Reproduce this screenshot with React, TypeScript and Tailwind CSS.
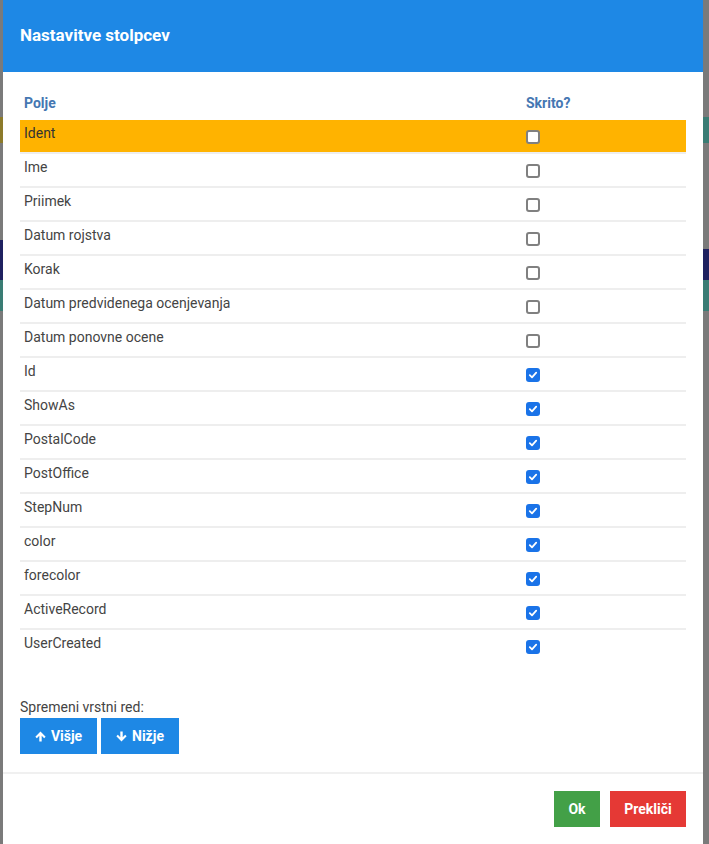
import React from "react";

type Field = { name: string; hidden: boolean };

const fields: Field[] = [
  { name: "Ident", hidden: false },
  { name: "Ime", hidden: false },
  { name: "Priimek", hidden: false },
  { name: "Datum rojstva", hidden: false },
  { name: "Korak", hidden: false },
  { name: "Datum predvidenega ocenjevanja", hidden: false },
  { name: "Datum ponovne ocene", hidden: false },
  { name: "Id", hidden: true },
  { name: "ShowAs", hidden: true },
  { name: "PostalCode", hidden: true },
  { name: "PostOffice", hidden: true },
  { name: "StepNum", hidden: true },
  { name: "color", hidden: true },
  { name: "forecolor", hidden: true },
  { name: "ActiveRecord", hidden: true },
  { name: "UserCreated", hidden: true },
];

function Check({ checked }: { checked: boolean }) {
  if (checked) {
    return (
      <div className="w-[14px] h-[14px] rounded-[3px] bg-[#1a73e8] flex items-center justify-center">
        <svg width="10" height="10" viewBox="0 0 10 10">
          <path d="M1.8 5.2 L4 7.3 L8.2 2.6" fill="none" stroke="white" strokeWidth="1.8" strokeLinecap="round" strokeLinejoin="round" />
        </svg>
      </div>
    );
  }
  return <div className="w-[14px] h-[14px] rounded-[3px] border-2 border-[#808080] bg-white" />;
}

// solid arrow glyph, pointing up by default
function Arrow({ down }: { down?: boolean }) {
  return (
    <svg width="11" height="11" viewBox="0 0 12 12" className={down ? "rotate-180" : ""}>
      <path d="M6 0.5 L11.6 6.2 L10 7.8 L7.3 5.1 V11.5 H4.7 V5.1 L2 7.8 L0.4 6.2 Z" fill="white" />
    </svg>
  );
}

export default function App() {
  return (
    <div
      className="w-[709px] h-[844px] flex bg-[#7a7a7a] overflow-hidden"
      style={{ fontFamily: "Roboto, 'Liberation Sans', sans-serif" }}
    >
      {/* page behind the dialog, visible at the edges */}
      <div className="w-[3px] flex flex-col bg-[#7a7a7a]">
        <div className="h-[117px]" />
        <div className="h-[26px] bg-[#8c7a2a]" />
        <div className="h-[97px]" />
        <div className="h-[40px] bg-[#1f2160]" />
        <div className="h-[31px] bg-[#3a7c74]" />
      </div>

      <div className="w-[700px] bg-white flex flex-col">
        <div className="h-[72px] bg-[#1e88e5] flex items-center px-[17px] pb-[1px]">
          <h1 className="text-white text-[17px] font-bold">Nastavitve stolpcev</h1>
        </div>

        <div className="px-[17px] pt-[16px]">
          <div className="flex h-[32px] items-center text-[14px] font-bold text-[#4577b2] pb-[2px]">
            <div className="w-[502px] pl-[4px]">Polje</div>
            <div className="flex-1 pl-[4px]">Skrito?</div>
          </div>
          {fields.map((f, i) => (
            <div
              key={f.name}
              className={
                i === 0
                  ? "flex h-[32px] items-center bg-[#ffb300] text-[#333]"
                  : "flex h-[34px] items-center border-t-2 border-[#eeeeee] text-[#444]"
              }
            >
              <div className={i === 0 ? "w-[502px] pl-[4px] text-[14px] pb-[6px]" : "w-[502px] pl-[4px] text-[14px] pb-[6px]"}>
                {f.name}
              </div>
              <div className="flex-1 pl-[4px] pt-[1px]">
                <Check checked={f.hidden} />
              </div>
            </div>
          ))}

          <div className="mt-[35px] text-[14px] text-[#444]">Spremeni vrstni red:</div>
          <div className="flex gap-[4px]">
            <button className="w-[77px] h-[36px] bg-[#1e88e5] text-white text-[14px] font-bold flex items-center justify-center gap-[5px]">
              <Arrow />
              Višje
            </button>
            <button className="w-[78px] h-[36px] bg-[#1e88e5] text-white text-[14px] font-bold flex items-center justify-center gap-[5px]">
              <Arrow down />
              Nižje
            </button>
          </div>
        </div>

        <div className="mt-[18px] border-t-2 border-[#f0f0f0]" />
        <div className="flex justify-end gap-[10px] px-[17px] pt-[17px]">
          <button className="w-[46px] h-[36px] bg-[#43a047] text-white text-[14px] font-bold">Ok</button>
          <button className="w-[76px] h-[36px] bg-[#e53935] text-white text-[14px] font-bold">Prekliči</button>
        </div>
      </div>

      <div className="flex-1 flex flex-col bg-[#7a7a7a]">
        <div className="h-[117px]" />
        <div className="h-[26px] bg-[#3a7c74]" />
        <div className="h-[106px]" />
        <div className="h-[31px] bg-[#1f2160]" />
        <div className="h-[31px] bg-[#3a7c74]" />
      </div>
    </div>
  );
}
